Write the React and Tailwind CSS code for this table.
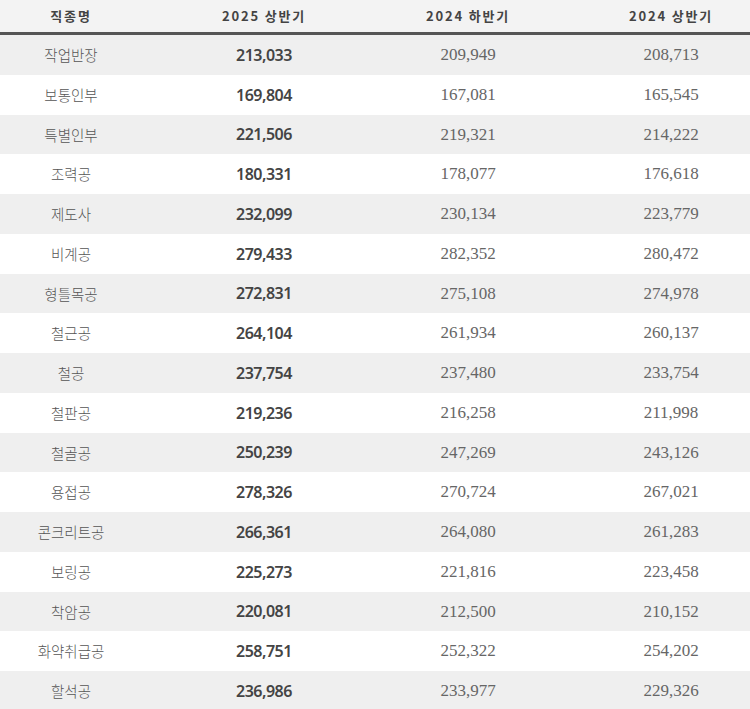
import React from 'react';

const rows = [
  ['작업반장', '213,033', '209,949', '208,713'],
  ['보통인부', '169,804', '167,081', '165,545'],
  ['특별인부', '221,506', '219,321', '214,222'],
  ['조력공', '180,331', '178,077', '176,618'],
  ['제도사', '232,099', '230,134', '223,779'],
  ['비계공', '279,433', '282,352', '280,472'],
  ['형틀목공', '272,831', '275,108', '274,978'],
  ['철근공', '264,104', '261,934', '260,137'],
  ['철공', '237,754', '237,480', '233,754'],
  ['철판공', '219,236', '216,258', '211,998'],
  ['철골공', '250,239', '247,269', '243,126'],
  ['용접공', '278,326', '270,724', '267,021'],
  ['콘크리트공', '266,361', '264,080', '261,283'],
  ['보링공', '225,273', '221,816', '223,458'],
  ['착암공', '220,081', '212,500', '210,152'],
  ['화약취급공', '258,751', '252,322', '254,202'],
  ['할석공', '236,986', '233,977', '229,326'],
];

const sans = "font-['Noto_Sans_CJK_KR','Noto_Sans',sans-serif]";
const serif = "font-['Liberation_Serif','Noto_Sans_CJK_KR',serif]";
const grid = 'grid grid-cols-[142px_244px_164px_1fr]';

export default function App() {
  return (
    <div className={`w-[750px] bg-white ${sans}`}>
      {/* header */}
      <div className={`${grid} h-[35px] items-center bg-[#f3f3f3] border-b-[3px] border-[#555] text-[13px] font-bold tracking-[1.8px] text-[#444]`}>
        <div className="text-center">직종명</div>
        <div className="text-center">2025 상반기</div>
        <div className="text-center">2024 하반기</div>
        <div className="text-center pl-[42px]">2024 상반기</div>
      </div>

      {rows.map((r, i) => (
        <div
          key={r[0]}
          className={`${grid} h-[39.75px] items-center ${i % 2 === 0 ? 'bg-[#efefef]' : 'bg-white'}`}
        >
          <div className="text-center text-[14.5px] font-light text-[#555]">{r[0]}</div>
          <div className="text-center font-['Noto_Sans',sans-serif] text-[16px] font-semibold tracking-[-0.5px] text-[#444]">{r[1]}</div>
          <div className={`text-center text-[17px] text-[#666] ${serif}`}>{r[2]}</div>
          <div className={`text-center pl-[42px] text-[17px] text-[#666] ${serif}`}>{r[3]}</div>
        </div>
      ))}
    </div>
  );
}
